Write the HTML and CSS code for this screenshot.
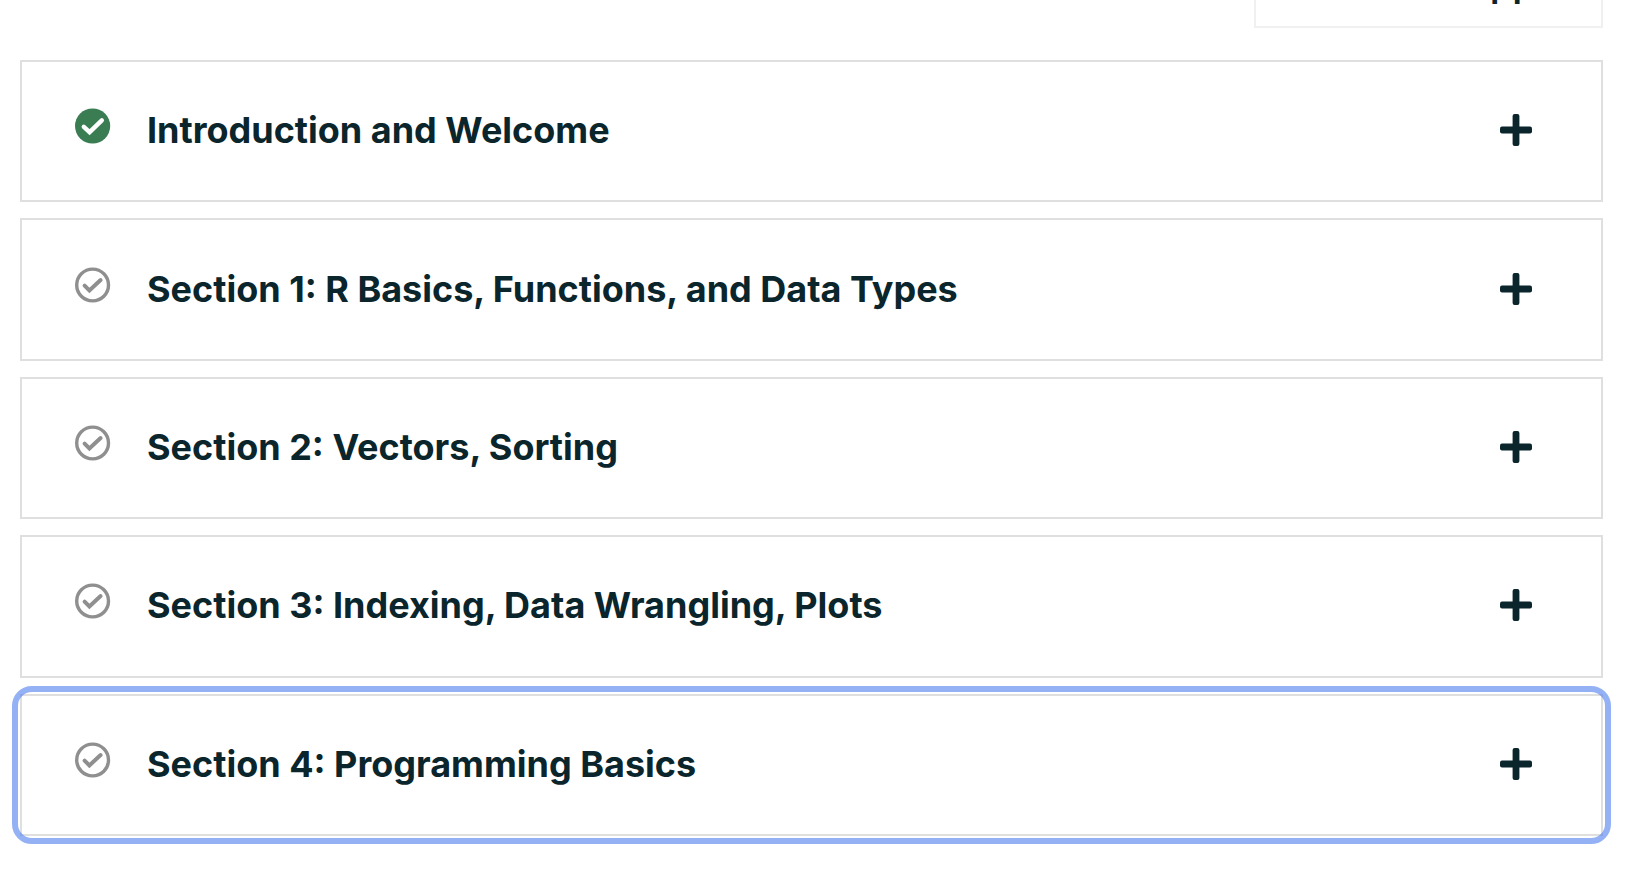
FILE: index.html
```
<!DOCTYPE html>
<html lang="en">
<head>
<meta charset="utf-8">
<meta name="viewport" content="width=device-width, initial-scale=1">
<title>Course outline</title>
<link rel="stylesheet" href="styles.css">
</head>
<body>
<svg width="0" height="0" class="sprite" aria-hidden="true">
  <symbol id="done" viewBox="0 0 36 36">
    <circle cx="17.6" cy="18" r="17.6" fill="#3a7d52"/>
    <path d="M8.8 18.8 14.6 24.2 26.8 12.4" fill="none" stroke="#fff" stroke-width="4.4" stroke-linecap="round"/>
  </symbol>
  <symbol id="todo" viewBox="0 0 36 36">
    <circle cx="17.6" cy="18" r="15.9" fill="none" stroke="#8f8f8f" stroke-width="3.4"/>
    <path d="M9.6 18.6 14.4 23.4 25.6 13" fill="none" stroke="#8f8f8f" stroke-width="4" stroke-linecap="round"/>
  </symbol>
  <symbol id="plus" viewBox="0 0 32 32">
    <rect x="0" y="12.6" width="32" height="6.8" rx="2" fill="#0a252b"/>
    <rect x="12.6" y="0" width="6.8" height="32" rx="2" fill="#0a252b"/>
  </symbol>
</svg>
<header class="toolbar">
  <button class="toolbar-button" type="button">pp</button>
</header>
<main class="sections">
  <h2 class="section"><button class="toggle" type="button" aria-expanded="false">
    <svg class="status"><use href="#done"/></svg>
    <span class="title">Introduction and Welcome</span>
    <svg class="plus"><use href="#plus"/></svg>
  </button></h2>
  <h2 class="section"><button class="toggle" type="button" aria-expanded="false">
    <svg class="status"><use href="#todo"/></svg>
    <span class="title">Section 1: R Basics, Functions, and Data Types</span>
    <svg class="plus"><use href="#plus"/></svg>
  </button></h2>
  <h2 class="section"><button class="toggle" type="button" aria-expanded="false">
    <svg class="status"><use href="#todo"/></svg>
    <span class="title">Section 2: Vectors, Sorting</span>
    <svg class="plus"><use href="#plus"/></svg>
  </button></h2>
  <h2 class="section"><button class="toggle" type="button" aria-expanded="false">
    <svg class="status"><use href="#todo"/></svg>
    <span class="title">Section 3: Indexing, Data Wrangling, Plots</span>
    <svg class="plus"><use href="#plus"/></svg>
  </button></h2>
  <h2 class="section section-focused"><button class="toggle" type="button" aria-expanded="false">
    <svg class="status"><use href="#todo"/></svg>
    <span class="title">Section 4: Programming Basics</span>
    <svg class="plus"><use href="#plus"/></svg>
  </button></h2>
</main>
</body>
</html>
```
FILE: styles.css
```
* {
  box-sizing: border-box;
}

body {
  display: flex;
  flex-direction: column;
  gap: 32px;
  min-height: 100vh;
  margin: 0;
  padding: 0 27px 36px 20px;
  background: #fff;
  color: #0a252b;
  font-family: Inter, "Liberation Sans", sans-serif;
}

.sprite {
  position: absolute;
}

/* The toolbar is scrolled partly out of view above the list. */
.toolbar {
  display: flex;
  justify-content: flex-end;
  align-items: flex-end;
  height: 28px;
}

.toolbar-button {
  flex: none;
  min-width: 349px;
  padding: 20px 66px 20px 24px;
  border: 2px solid #f0f0f0;
  background: #fff;
  color: inherit;
  font: 600 36px/44px Inter, "Liberation Sans", sans-serif;
  text-align: right;
}

.sections {
  display: grid;
  flex: 1;
  grid-auto-rows: 1fr;
  gap: 16px;
}

.section {
  position: relative;
  display: flex;
  margin: 0;
  border: 2px solid #dfdfdf;
}

.section-focused::after {
  content: "";
  position: absolute;
  inset: -10px;
  border: 6px solid rgba(77, 125, 238, 0.6);
  border-radius: 20px;
  pointer-events: none;
}

.toggle {
  display: flex;
  flex: 1;
  align-items: center;
  padding: 44px 69px 46px 53px;
  border: 0;
  background: none;
  color: inherit;
  font: 700 36px/44px Inter, "Liberation Sans", sans-serif;
  text-align: left;
}

.toggle:focus {
  outline: none;
}

.status {
  flex: none;
  width: 36px;
  height: 36px;
  margin-bottom: 8px;
}

.title {
  flex: 1;
  margin-left: 36px;
}

.plus {
  flex: none;
  width: 32px;
  height: 32px;
}
```
